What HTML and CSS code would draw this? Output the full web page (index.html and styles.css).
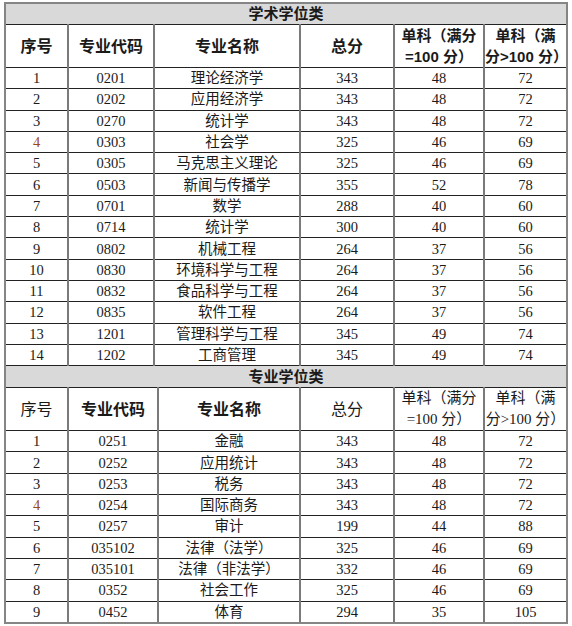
FILE: index.html
```html
<!DOCTYPE html>
<html lang="zh-CN">
<head>
<meta charset="utf-8">
<link rel="stylesheet" href="styles.css">
</head>
<body>
<div class="sheet">
  <table class="grid grid-a">
    <colgroup><col class="c1"><col class="c2"><col class="c3"><col class="c4"><col class="c5"><col class="c6"></colgroup>
    <tr class="title"><td colspan="6">学术学位类</td></tr>
    <tr class="head bold">
      <td>序号</td><td>专业代码</td><td>专业名称</td><td>总分</td>
      <td class="sub">单科（满分<br>=100 分）</td><td class="sub">单科（满<br>分&gt;100 分）</td>
    </tr>
    <tr><td>1</td><td>0201</td><td>理论经济学</td><td>343</td><td>48</td><td>72</td></tr>
    <tr><td>2</td><td>0202</td><td>应用经济学</td><td>343</td><td>48</td><td>72</td></tr>
    <tr><td>3</td><td>0270</td><td>统计学</td><td>343</td><td>48</td><td>72</td></tr>
    <tr><td class="hl">4</td><td>0303</td><td>社会学</td><td>325</td><td>46</td><td>69</td></tr>
    <tr><td>5</td><td>0305</td><td>马克思主义理论</td><td>325</td><td>46</td><td>69</td></tr>
    <tr><td>6</td><td>0503</td><td>新闻与传播学</td><td>355</td><td>52</td><td>78</td></tr>
    <tr><td>7</td><td>0701</td><td>数学</td><td>288</td><td>40</td><td>60</td></tr>
    <tr><td>8</td><td>0714</td><td>统计学</td><td>300</td><td>40</td><td>60</td></tr>
    <tr><td>9</td><td>0802</td><td>机械工程</td><td>264</td><td>37</td><td>56</td></tr>
    <tr><td>10</td><td>0830</td><td>环境科学与工程</td><td>264</td><td>37</td><td>56</td></tr>
    <tr><td>11</td><td>0832</td><td>食品科学与工程</td><td>264</td><td>37</td><td>56</td></tr>
    <tr><td>12</td><td>0835</td><td>软件工程</td><td>264</td><td>37</td><td>56</td></tr>
    <tr><td>13</td><td>1201</td><td>管理科学与工程</td><td>345</td><td>49</td><td>74</td></tr>
    <tr><td>14</td><td>1202</td><td>工商管理</td><td>345</td><td>49</td><td>74</td></tr>
  </table>
  <table class="grid grid-b">
    <colgroup><col class="c1"><col class="c2b"><col class="c3b"><col class="c4"><col class="c5"><col class="c6"></colgroup>
    <tr class="title"><td colspan="6">专业学位类</td></tr>
    <tr class="head">
      <td>序号</td><td class="bold">专业代码</td><td class="bold">专业名称</td><td>总分</td>
      <td class="sub">单科（满分<br>=100 分）</td><td class="sub">单科（满<br>分&gt;100 分）</td>
    </tr>
    <tr><td>1</td><td>0251</td><td>金融</td><td>343</td><td>48</td><td>72</td></tr>
    <tr><td>2</td><td>0252</td><td>应用统计</td><td>343</td><td>48</td><td>72</td></tr>
    <tr><td>3</td><td>0253</td><td>税务</td><td>343</td><td>48</td><td>72</td></tr>
    <tr><td class="hl">4</td><td>0254</td><td>国际商务</td><td>343</td><td>48</td><td>72</td></tr>
    <tr><td>5</td><td>0257</td><td>审计</td><td>199</td><td>44</td><td>88</td></tr>
    <tr><td>6</td><td>035102</td><td>法律（法学）</td><td>325</td><td>46</td><td>69</td></tr>
    <tr><td>7</td><td>035101</td><td>法律（非法学）</td><td>332</td><td>46</td><td>69</td></tr>
    <tr><td>8</td><td>0352</td><td>社会工作</td><td>325</td><td>46</td><td>69</td></tr>
    <tr><td>9</td><td>0452</td><td>体育</td><td>294</td><td>35</td><td>105</td></tr>
  </table>
</div>
</body>
</html>
```
FILE: styles.css
```css
html, body {
  margin: 0;
  padding: 0;
  background: #ffffff;
}
body {
  padding: 2px 0 0 4px;
  font-family: "Liberation Serif", "Noto Sans CJK SC", serif;
  color: #1a1a1a;
}
.sheet {
  width: 564px;
  border: 2px solid #858585;
  box-sizing: border-box;
}
.grid {
  width: 100%;
  border-collapse: collapse;
  table-layout: fixed;
  font-size: 14.5px;
}
.c1 { width: 62px; }
.c2 { width: 86px; }
.c3 { width: 146px; }
.c2b { width: 90px; }
.c3b { width: 142px; }
.c4 { width: 94px; }
.c5 { width: 90px; }
.c6 { width: 82px; }
.grid td {
  border-top: 1px solid #222;
  border-bottom: 1px solid #222;
  border-left: 2px solid #7a7a7a;
  border-right: 2px solid #7a7a7a;
  text-align: center;
  vertical-align: middle;
  padding: 0;
  height: 20.3px;
  line-height: 20px;
  white-space: nowrap;
}
.grid tr:first-child td { border-top: none; }
.grid-b tr:last-child td { border-bottom: none; }
.grid td:first-child { border-left: none; }
.grid td:last-child { border-right: none; }
.title td {
  background: #d9d9d9;
  font-weight: bold;
  font-size: 15px;
  font-family: "Liberation Sans", "Noto Sans CJK SC", sans-serif;
  height: 19px;
}
.grid-b .title td { height: 21px; }
.head td {
  height: 41px;
  font-size: 16px;
  line-height: 21px;
}
.head td.sub {
  font-size: 15px;
}
.bold td, td.bold {
  font-weight: bold;
  font-family: "Liberation Sans", "Noto Sans CJK SC", sans-serif;
}
.hl { color: #9a4a12; }
```
